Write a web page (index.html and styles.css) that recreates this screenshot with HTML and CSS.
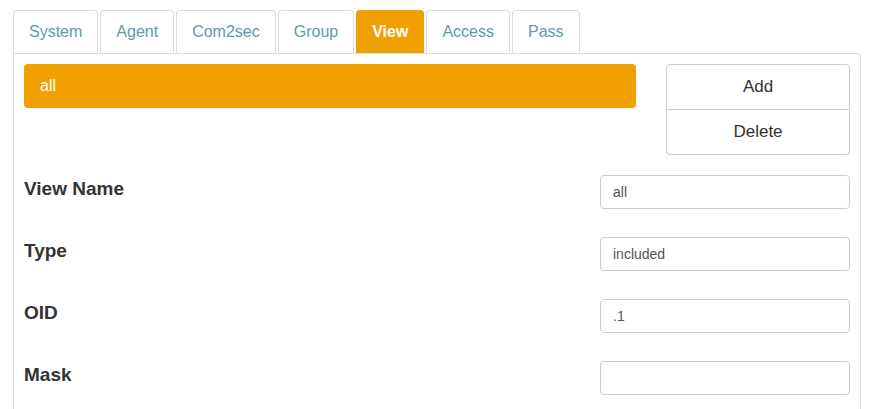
FILE: index.html
```html
<!DOCTYPE html>
<html>
<head>
	<title>snmpd config - view</title>
	<link rel="stylesheet" href="styles.css">
</head>
<body>
<div class="wrap">
	<ul class="tabs">
		<li><a href="#">System</a></li>
		<li><a href="#">Agent</a></li>
		<li><a href="#">Com2sec</a></li>
		<li><a href="#">Group</a></li>
		<li class="active"><a href="#">View</a></li>
		<li><a href="#">Access</a></li>
		<li><a href="#">Pass</a></li>
	</ul>
	<div class="panel">
		<div class="top">
			<div class="list">
				<div class="item selected">all</div>
			</div>
			<div class="btns">
				<button class="btn first">Add</button>
				<button class="btn last">Delete</button>
			</div>
		</div>
		<div class="fields">
			<div class="row">
				<label>View Name</label>
				<input type="text" value="all">
			</div>
			<div class="row">
				<label>Type</label>
				<input type="text" value="included">
			</div>
			<div class="row">
				<label>OID</label>
				<input type="text" value=".1">
			</div>
			<div class="row">
				<label>Mask</label>
				<input type="text" value="">
			</div>
		</div>
	</div>
</div>
</body>
</html>
```

FILE: styles.css
```css
body{
	margin: 0;
	background: #fff;
	font-family: "Liberation Sans", Arial, sans-serif;
	font-size: 16px;
	color: #333;
}
.wrap{
	margin: 10px 11px 0 13px;
}
.tabs{
	list-style: none;
	margin: 0;
	padding: 0;
	display: flex;
}
.tabs li{
	margin-right: 2px;
}
.tabs a{
	display: block;
	padding: 10px 15px;
	line-height: 22px;
	border: 1px solid #ddd;
	border-bottom: none;
	border-radius: 4px 4px 0 0;
	color: #5f9aa8;
	text-decoration: none;
}
.tabs .active a{
	background: #f0a000;
	border-color: #f0a000;
	color: #fff;
	font-weight: bold;
}
.panel{
	border: 1px solid #ddd;
	border-radius: 0 4px 4px 4px;
	padding: 10px;
	height: 400px;
}
.top{
	display: flex;
	align-items: flex-start;
}
.list{
	width: 612px;
}
.item{
	height: 44px;
	line-height: 44px;
	padding-left: 16px;
	border-radius: 4px;
}
.selected{
	background: #f0a000;
	color: #fff;
}
.btns{
	margin-left: auto;
	width: 184px;
	display: flex;
	flex-direction: column;
}
.btn{
	background: #fff;
	border: 1px solid #ccc;
	font-family: inherit;
	font-size: 17px;
	color: #333;
	padding: 0;
}
.btn.first{
	height: 46px;
	border-radius: 4px 4px 0 0;
}
.btn.last{
	height: 45px;
	border-radius: 0 0 4px 4px;
	border-top: none;
}
.fields{
	margin-top: 20px;
}
.row{
	display: flex;
	justify-content: space-between;
	align-items: flex-start;
	margin-bottom: 28px;
}
.row label{
	font-weight: bold;
	font-size: 19px;
	line-height: 28px;
}
.row input{
	width: 250px;
	height: 34px;
	box-sizing: border-box;
	padding: 6px 12px;
	border: 1px solid #ccc;
	border-radius: 4px;
	font-family: inherit;
	font-size: 14px;
	color: #555;
	outline: none;
}
```
